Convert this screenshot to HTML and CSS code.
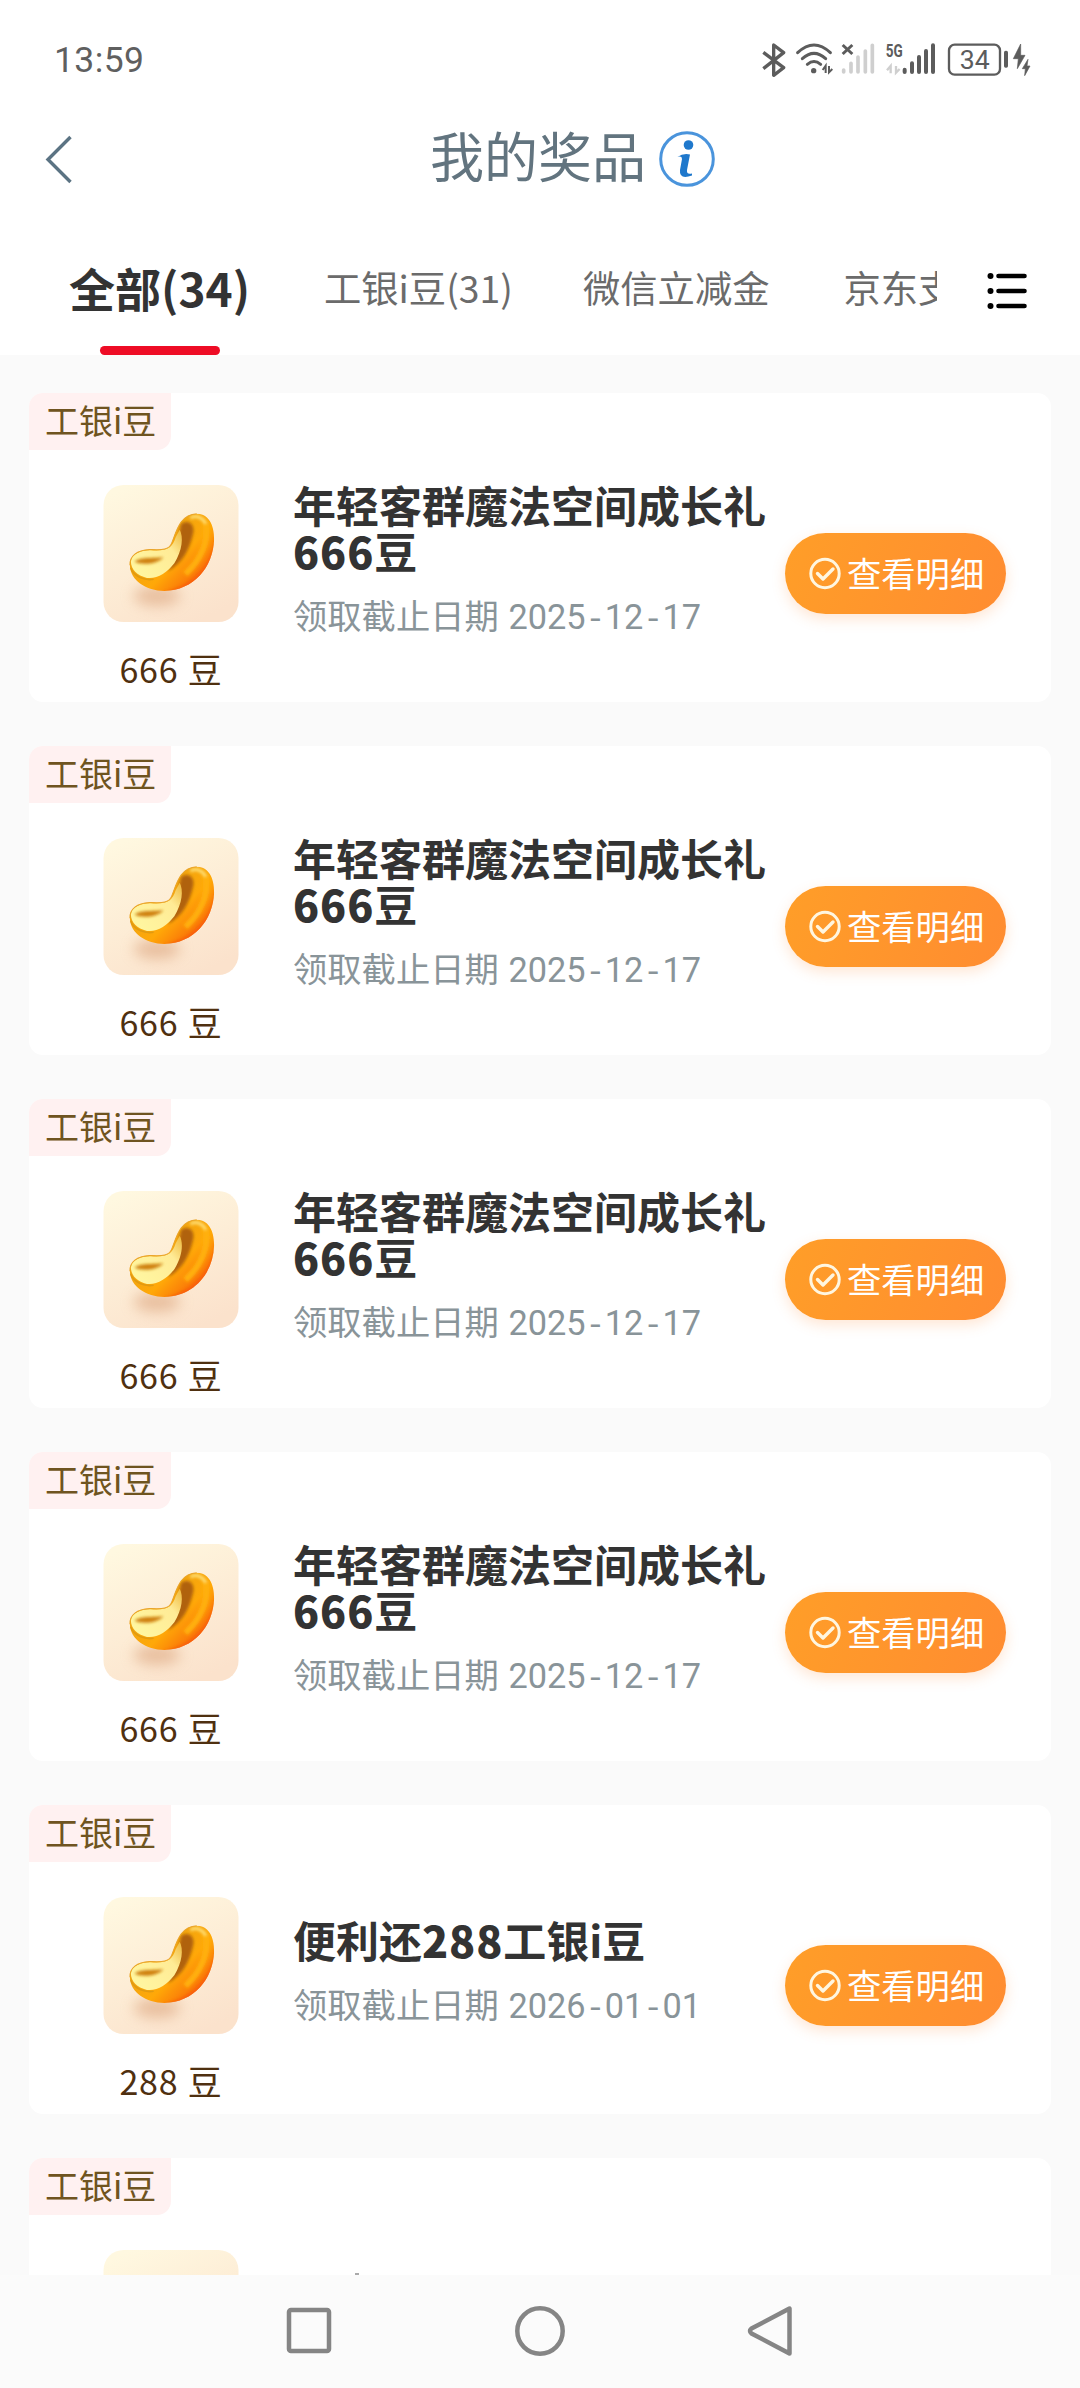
FILE: index.html
```html
<!DOCTYPE html>
<html lang="zh-CN">
<head>
<meta charset="utf-8">
<title>我的奖品</title>
<link rel="stylesheet" href="styles.css">
</head>
<body>
<svg class="defs" width="0" height="0" aria-hidden="true">
  <defs>
    <linearGradient id="tile" x1="0.2" y1="0" x2="0.7" y2="1"><stop offset="0" stop-color="#fff8e0"/><stop offset="0.5" stop-color="#fdedd6"/><stop offset="1" stop-color="#fbe2cc"/></linearGradient>
    <linearGradient id="gold" gradientUnits="userSpaceOnUse" x1="180" y1="230" x2="300" y2="350"><stop offset="0" stop-color="#f0a511"/><stop offset="0.5" stop-color="#ffa808"/><stop offset="1" stop-color="#f96e08"/></linearGradient>
    <linearGradient id="shine" gradientUnits="userSpaceOnUse" x1="140" y1="300" x2="290" y2="170"><stop offset="0" stop-color="#fff6a0"/><stop offset="0.6" stop-color="#ffeb96"/><stop offset="1" stop-color="#e8a820"/></linearGradient>
    <filter id="soft" x="-40%" y="-40%" width="180%" height="180%"><feGaussianBlur stdDeviation="5"/></filter>
    <filter id="haze" x="-80%" y="-150%" width="260%" height="400%"><feGaussianBlur stdDeviation="20"/></filter>
    <clipPath id="beanClip"><path d="M119 284C118 256 140 239 178 237C214 238 235 240 244 218C258 184 268 132 319 130C352 130 372 160 371 208C368 290 310 360 222 361C168 360 120 330 119 284Z"/></clipPath>
    <symbol id="bean" viewBox="40 44 404 410">
      <rect x="40" y="44" width="404" height="410" rx="60" fill="url(#tile)"/>
      <ellipse cx="200" cy="376" rx="70" ry="30" fill="#dba37c" opacity="0.6" filter="url(#haze)"/>
      <g clip-path="url(#beanClip)">
        <rect x="110" y="120" width="270" height="250" fill="url(#gold)"/>
        <path d="M375 200C360 300 290 350 220 364L310 375L385 300Z" fill="#f85a0c" filter="url(#soft)" opacity="0.8"/>
        <path d="M345 155C358 210 330 270 285 310" fill="none" stroke="#ffb010" stroke-width="18" filter="url(#soft)"/>
        <path d="M272 160C298 145 315 165 308 190C298 235 280 275 232 303C262 250 262 205 272 160Z" fill="#b0620a" filter="url(#soft)"/>
        <path d="M122 274C122 250 150 240 180 239C230 243 246 232 256 200L268 178C280 200 276 240 252 278C230 306 200 326 170 322C140 316 122 295 122 274Z" fill="url(#shine)"/>
        <path d="M133 274C145 258 190 264 220 260C200 282 155 284 133 274Z" fill="#cf8010" filter="url(#soft)"/>
        <path d="M120 292C135 322 165 330 190 326" fill="none" stroke="#e19a10" stroke-width="5"/>
        <path d="M300 143C318 132 338 142 346 160" fill="none" stroke="#ffe27a" stroke-width="9" filter="url(#soft)"/>
      </g>
      <path d="M119 284C118 256 140 239 178 237C214 238 235 240 244 218C258 184 268 132 319 130" fill="none" stroke="#e9a52b" stroke-width="3"/>
    </symbol>
    <symbol id="check" viewBox="0 0 32 33">
      <circle cx="16" cy="16.5" r="14.2" fill="none" stroke="#fff6e0" stroke-width="3"/>
      <path d="M8.5 16.5L14 22L24 12" fill="none" stroke="#fff6e0" stroke-width="3.400" stroke-linecap="round" stroke-linejoin="round"/>
    </symbol>
  </defs>
</svg>

<header class="status">
  <span class="time">13:59</span>
  <div class="status-icons">
    <svg width="24" height="40" viewBox="66 60 72 120"><path d="M70 97L131 143L101 166V75L131 98L70 146" fill="none" stroke="#5c5c5c" stroke-width="10" stroke-linejoin="round"/></svg>
    <svg class="wifi" width="37" height="40" viewBox="168 60 111 120"><g fill="none" stroke="#5c5c5c" stroke-width="9" stroke-linecap="round"><path d="M173 98Q222 52 271 98"/><path d="M187 116Q222 84 257 116"/><path d="M202 133Q222 116 242 133"/></g><circle cx="221" cy="152" r="8" fill="#5c5c5c"/><path d="M257 159V137L248 150M267 138V157L277 147" fill="none" stroke="#5c5c5c" stroke-width="6"/></svg>
    <svg class="sim" width="34" height="40" viewBox="303 60 102 120"><path d="M308 75L337 102M337 75L308 102" stroke="#5c5c5c" stroke-width="9"/><g stroke="#cfcfcf" stroke-width="11" stroke-linecap="round"><path d="M311 150V156M333 130V156M354 111V156M376 93V156M397 76V156"/></g></svg>
    <svg class="sim5" width="51" height="40" viewBox="435 60 153 120"><text x="437" y="110" class="five" textLength="51" lengthAdjust="spacingAndGlyphs">5G</text><path d="M452 160V138L441 151M468 138V158L479 147" fill="none" stroke="#cfcfcf" stroke-width="7"/><g stroke="#5c5c5c" stroke-width="12" stroke-linecap="round"><path d="M494 149V156M516 130V156M537 111V156M558 93V156M579 76V156"/></g></svg>
    <svg class="batt" width="84" height="40" viewBox="621 60 252 120"><rect x="627" y="74" width="153" height="90" rx="17" fill="none" stroke="#5c5c5c" stroke-width="7"/><text x="704" y="146" class="pct">34</text><rect x="792" y="92" width="12" height="51" rx="5" fill="#5c5c5c"/><path d="M842 72L820 116H835L832 146L855 106H842ZM864 118L847 146H856L854 167L870 138H861Z" fill="#5c5c5c" stroke="#5c5c5c" stroke-width="2"/></svg>
  </div>
</header>

<nav class="titlebar">
  <svg class="back" width="28" height="50" viewBox="0 0 28 50"><path d="M25.500 3L3 25.500L25.500 48" fill="none" stroke="#5b7383" stroke-width="3.400"/></svg>
  <h1>我的奖品</h1>
  <svg class="info" width="58" height="58" viewBox="0 0 58 58"><circle cx="29" cy="29" r="26.300" fill="none" stroke="#4a94dc" stroke-width="3"/><circle cx="30.500" cy="15" r="4.800" fill="#1f78cc"/><path d="M19.500 27Q25 23 32 24.500L29 40Q28.500 45 34 43.500V45.500Q21 50 22 40L24 29Q24 25.500 19.500 27Z" fill="#1f78cc"/></svg>
</nav>

<div class="tabs">
  <div class="tab-strip">
    <span class="tab active">全部(34)</span>
    <span class="tab beans">工银i豆(31)</span>
    <span class="tab">微信立减金</span>
    <span class="tab">京东支</span>
  </div>
  <svg class="menu" width="40" height="38" viewBox="0 0 40 38"><path d="M11.500 4H37.500M11.500 19H37.500M11.500 34H37.500" stroke="#000" stroke-width="4.600" stroke-linecap="round"/><circle cx="3.500" cy="4" r="3"/><circle cx="3.500" cy="19" r="3"/><circle cx="3.500" cy="34" r="3"/></svg>
</div>

<main class="list">
  <article class="card">
    <span class="tag">工银i豆</span>
    <div class="prize"><svg class="bean"><use href="#bean"/></svg><p>666 豆</p></div>
    <div class="info-col"><h2>年轻客群魔法空间成长礼<br><b>666</b>豆</h2><p>领取截止日期 <span class="date">2025<i>-</i>12<i>-</i>17</span></p></div>
    <button class="detail"><svg class="check"><use href="#check"/></svg>查看明细</button>
  </article>
  <article class="card">
    <span class="tag">工银i豆</span>
    <div class="prize"><svg class="bean"><use href="#bean"/></svg><p>666 豆</p></div>
    <div class="info-col"><h2>年轻客群魔法空间成长礼<br><b>666</b>豆</h2><p>领取截止日期 <span class="date">2025<i>-</i>12<i>-</i>17</span></p></div>
    <button class="detail"><svg class="check"><use href="#check"/></svg>查看明细</button>
  </article>
  <article class="card">
    <span class="tag">工银i豆</span>
    <div class="prize"><svg class="bean"><use href="#bean"/></svg><p>666 豆</p></div>
    <div class="info-col"><h2>年轻客群魔法空间成长礼<br><b>666</b>豆</h2><p>领取截止日期 <span class="date">2025<i>-</i>12<i>-</i>17</span></p></div>
    <button class="detail"><svg class="check"><use href="#check"/></svg>查看明细</button>
  </article>
  <article class="card">
    <span class="tag">工银i豆</span>
    <div class="prize"><svg class="bean"><use href="#bean"/></svg><p>666 豆</p></div>
    <div class="info-col"><h2>年轻客群魔法空间成长礼<br><b>666</b>豆</h2><p>领取截止日期 <span class="date">2025<i>-</i>12<i>-</i>17</span></p></div>
    <button class="detail"><svg class="check"><use href="#check"/></svg>查看明细</button>
  </article>
  <article class="card">
    <span class="tag">工银i豆</span>
    <div class="prize"><svg class="bean"><use href="#bean"/></svg><p>288 豆</p></div>
    <div class="info-col"><h2>便利还<b>288</b>工银i豆</h2><p>领取截止日期 <span class="date">2026<i>-</i>01<i>-</i>01</span></p></div>
    <button class="detail"><svg class="check"><use href="#check"/></svg>查看明细</button>
  </article>
  <article class="card">
    <span class="tag">工银i豆</span>
    <div class="prize"><svg class="bean"><use href="#bean"/></svg></div>
    <div class="peek"></div>
  </article>
</main>

<footer class="sysnav">
  <svg width="50" height="54" viewBox="0 0 50 54"><rect x="5" y="6" width="40" height="41" rx="2" fill="none" stroke="#858585" stroke-width="4.500"/></svg>
  <svg width="54" height="54" viewBox="0 0 54 54"><circle cx="27" cy="27" r="22.700" fill="none" stroke="#858585" stroke-width="4.500"/></svg>
  <svg width="50" height="54" viewBox="0 0 50 54"><path d="M43.500 4.500V49.500L5.500 29.500Q2.500 27 5.500 24.500Z" fill="none" stroke="#858585" stroke-width="4.500" stroke-linejoin="round"/></svg>
</footer>
</body>
</html>
```
FILE: styles.css
```css
* { box-sizing: border-box; }

body {
  margin: 0;
  width: 1080px;
  height: 2388px;
  overflow: hidden;
  display: flex;
  flex-direction: column;
  background: #fff;
  font-family: "Noto Sans CJK SC", "Noto Sans", sans-serif;
}

h1, h2, p { margin: 0; font-weight: 400; }
svg { display: block; flex: none; }
.defs { position: absolute; }

.status {
  height: 100px;
  flex: none;
  display: flex;
  justify-content: space-between;
  align-items: flex-start;
  padding: 39px 49px 0 54px;
  color: #5f5f5f;
}
.time { font: 35.5px/42px Roboto, sans-serif; letter-spacing: 0.4px; }
.status-icons { display: flex; padding-top: 1px; }
.wifi { margin-left: 10px; }
.sim { margin-left: 8px; }
.sim5 { margin-left: 10px; }
.batt { margin-left: 11px; }
.five { font: 700 54px Roboto, sans-serif; fill: #5c5c5c; }
.pct { font: 80px Roboto, sans-serif; fill: #5c5c5c; text-anchor: middle; }

.titlebar {
  height: 118px;
  flex: none;
  display: flex;
  align-items: center;
  padding-left: 45px;
}
.titlebar h1 {
  margin: -8px 0 0 357px;
  font-size: 54px;
  line-height: 70px;
  color: #62747f;
}
.info { margin-left: 12px; }

.tabs {
  height: 137px;
  flex: none;
  display: flex;
  padding-left: 69px;
}
.tab-strip {
  width: 868px;
  display: flex;
  gap: 74px;
  overflow: hidden;
  white-space: nowrap;
}
.tab {
  flex: none;
  font-size: 37.3px;
  line-height: 139px;
  color: #6b6b6b;
}
.tab.active {
  width: 181px;
  font-size: 46px;
  font-weight: 700;
  color: #333;
  position: relative;
}
.tab.active::after {
  content: "";
  position: absolute;
  left: 31px;
  bottom: 0;
  width: 120px;
  height: 9px;
  border-radius: 5px;
  background: #ee0c25;
}
.tab.beans { width: 185px; }
.menu { margin: 54px 0 0 50px; }

.list {
  height: 1920px;
  flex: none;
  overflow: hidden;
  background: #fafafa;
  padding: 38px 29px 0;
  display: flex;
  flex-direction: column;
  gap: 44.1px;
}
.card {
  height: 309px;
  flex: none;
  display: grid;
  grid-template-columns: 264px 492px 221px;
  grid-template-rows: 56px 253px;
  background: #fff;
  border-radius: 14px;
}
.tag {
  grid-column: 1 / -1;
  width: 142px;
  height: 57px;
  padding-left: 16px;
  font-size: 34px;
  line-height: 54px;
  color: #6f5420;
  background: #fff1f1;
  border-radius: 14px 0 14px 0;
}
.prize {
  width: 136px;
  margin-left: 74px;
  padding-top: 35.5px;
}
.bean { width: 136px; height: 137px; }
.prize p {
  margin-top: 22px;
  text-align: center;
  font-size: 34px;
  line-height: 50px;
  letter-spacing: 0.8px;
  word-spacing: 1px;
  color: #4f3010;
}
.info-col {
  display: flex;
  flex-direction: column;
  justify-content: center;
  height: 153px;
  margin-top: 33px;
  white-space: nowrap;
}
.info-col h2 {
  font-size: 43px;
  font-weight: 700;
  line-height: 46.5px;
  color: #333;
}
.info-col h2 b { letter-spacing: 0.9px; }
.info-col p {
  margin-top: 20px;
  font-size: 34.3px;
  line-height: 40px;
  word-spacing: 2px;
  color: #899499;
}
.date { font-family: Roboto, sans-serif; letter-spacing: 0; }
.date i { font: 33px/1 "Liberation Mono", monospace; letter-spacing: -0.6px; }
.detail {
  width: 221px;
  height: 81px;
  margin: 84px 0 0;
  padding: 0 0 4px 24px;
  display: flex;
  align-items: center;
  gap: 6px;
  border: 0;
  border-radius: 41px;
  background: linear-gradient(110deg, #ff9e28, #ff8c31);
  box-shadow: 0 5px 14px rgba(255, 140, 60, 0.22);
  color: #fff;
  font: 34.3px/50px "Noto Sans CJK SC", sans-serif;
  white-space: nowrap;
}
.check { width: 32px; height: 33px; margin-top: 4px; }
.peek {
  width: 4px;
  height: 2px;
  margin: 59px 0 0 62px;
  background: #aaa;
}

.sysnav {
  height: 113px;
  flex: none;
  display: flex;
  justify-content: center;
  gap: 179px;
  padding-top: 29px;
  background: #fbfbfb;
}
```
